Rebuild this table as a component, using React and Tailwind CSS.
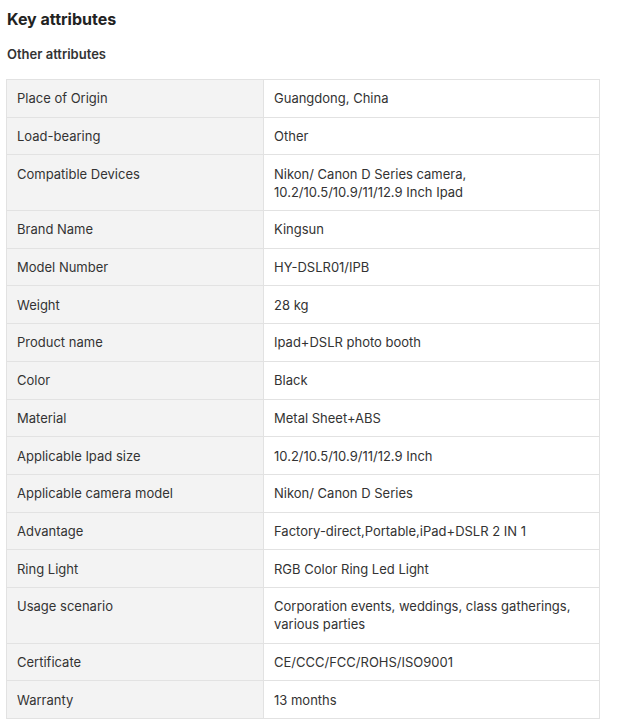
const rows = [
  ["Place of Origin", "Guangdong, China"],
  ["Load-bearing", "Other"],
  ["Compatible Devices", "Nikon/ Canon D Series camera, 10.2/10.5/10.9/11/12.9 Inch Ipad"],
  ["Brand Name", "Kingsun"],
  ["Model Number", "HY-DSLR01/IPB"],
  ["Weight", "28 kg"],
  ["Product name", "Ipad+DSLR photo booth"],
  ["Color", "Black"],
  ["Material", "Metal Sheet+ABS"],
  ["Applicable Ipad size", "10.2/10.5/10.9/11/12.9 Inch"],
  ["Applicable camera model", "Nikon/ Canon D Series"],
  ["Advantage", "Factory-direct,Portable,iPad+DSLR 2 IN 1"],
  ["Ring Light", "RGB Color Ring Led Light"],
  ["Usage scenario", "Corporation events, weddings, class gatherings, various parties"],
  ["Certificate", "CE/CCC/FCC/ROHS/ISO9001"],
  ["Warranty", "13 months"],
];

export default function App() {
  return (
    <div
      className="bg-white px-[6px] pt-[9px] text-[#222]"
      style={{ fontFamily: "Inter, 'Noto Sans', sans-serif" }}
    >
      <h2 className="pl-px text-[16px] font-bold leading-[20px]">Key attributes</h2>
      <h3 className="mt-[17px] pl-px text-[13px] font-semibold leading-[16px] text-[#333]">
        Other attributes
      </h3>
      <table className="mt-[17px] w-[594px] table-fixed border-collapse text-[13px] leading-[18px] text-[#333]">
        <colgroup>
          <col className="w-[257px]" />
          <col />
        </colgroup>
        <tbody>
          {rows.map(([k, v]) => (
            <tr key={k}>
              <td className="border border-[#e2e2e2] bg-[#f3f3f3] px-[10px] py-[9.35px] align-top">
                {k}
              </td>
              <td className="border border-[#e2e2e2] px-[10px] py-[9.35px] align-top">
                {v}
              </td>
            </tr>
          ))}
        </tbody>
      </table>
    </div>
  );
}
